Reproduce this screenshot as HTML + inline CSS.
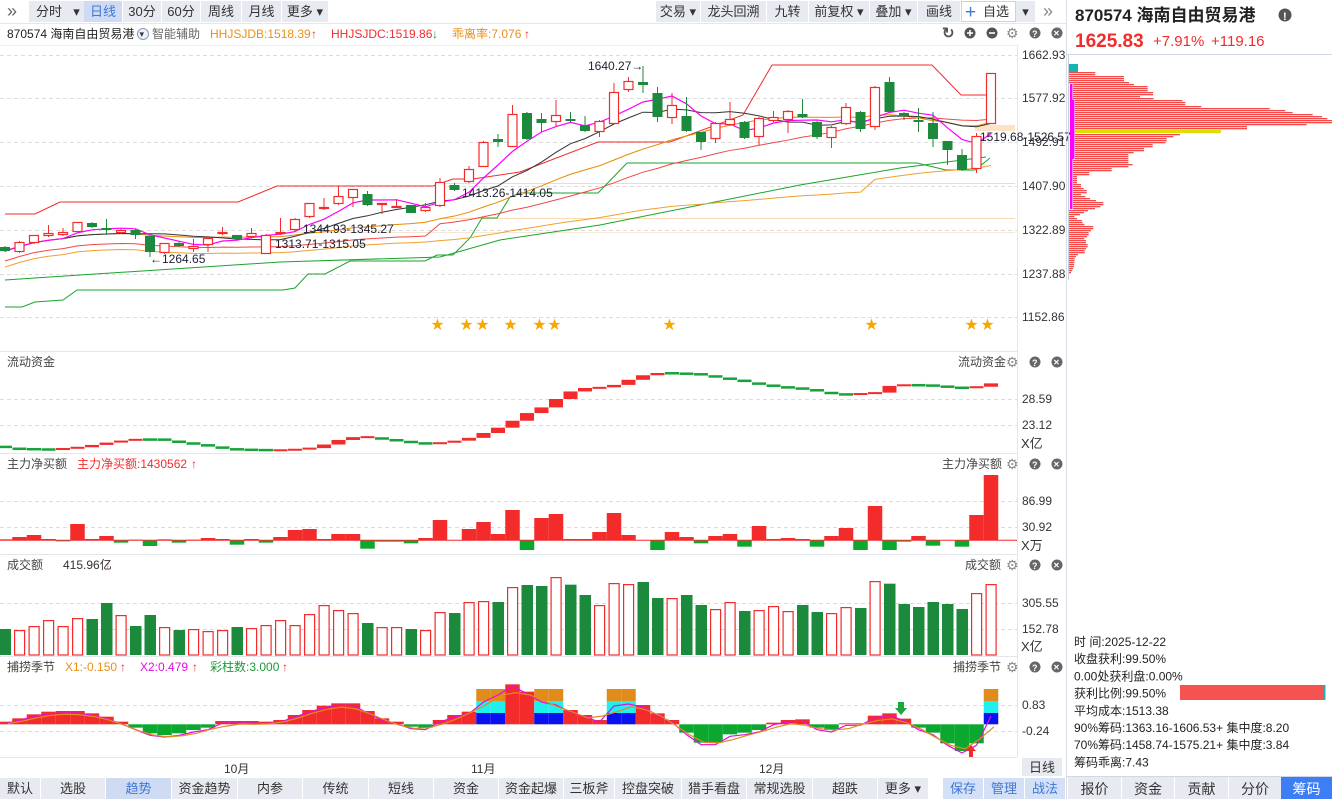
<!DOCTYPE html>
<html><head><meta charset="utf-8">
<style>
html,body{margin:0;padding:0;background:#fff;width:1332px;height:799px;overflow:hidden}
svg text{font-family:"Liberation Sans","Noto Sans CJK SC",sans-serif;font-size:12px}
</style></head>
<body>
<svg id="s" width="1332" height="799" xmlns="http://www.w3.org/2000/svg" style="position:absolute;left:0;top:0">
<rect width="1332" height="799" fill="#fff"/>
</svg>
<script>
const S=document.getElementById('s');const NS='http://www.w3.org/2000/svg';
function el(t,a,txt){const e=document.createElementNS(NS,t);let st='';for(const k in a){if(k==='font-size'||k==='font-weight'){st+=k+':'+a[k]+';';}else e.setAttribute(k,a[k]);}if(st)e.setAttribute('style',st);if(txt!==undefined)e.textContent=txt;S.appendChild(e);return e;}
function R(x,y,w,h,f,extra){return el('rect',Object.assign({x,y,width:w,height:h,fill:f},extra||{}));}
function T(x,y,s,c,extra){return el('text',Object.assign({x,y,fill:c||'#333'},extra||{}),s);}
function L(x1,y1,x2,y2,c,extra){return el('line',Object.assign({x1,y1,x2,y2,stroke:c,'stroke-width':1},extra||{}));}
function P(pts,c,w){return el('polyline',{points:pts.map(p=>p.join(',')).join(' '),fill:'none',stroke:c,'stroke-width':w||1});}
const RED='#f32b2b',GRN='#1b8a3c',XS=i=>5+i*14.5;

// ---------- top toolbar ----------
R(0,0,1066,23,'#fff');
T(7,17,'»','#666',{'font-size':'18px'});
const tb=[[29,40,'分时'],[69,15,'▾'],[84,38,'日线',1],[123,38,'30分'],[162,38,'60分'],[201,40,'周线'],[242,39,'月线'],[282,46,'更多 ▾']];
tb.forEach(b=>{R(b[0],1,b[1],21,b[3]?'#cfdbf2':'#e7eaf0');T(b[0]+b[1]/2,16,b[2],b[3]?'#3c78d8':'#333',{'text-anchor':'middle','font-size':'13px'});});
const tb2=[[656,44,'交易 ▾'],[701,65,'龙头回溯'],[767,41,'九转'],[809,60,'前复权 ▾'],[870,47,'叠加 ▾'],[918,42,'画线'],[1016,19,'▾']];
tb2.forEach(b=>{R(b[0],1,b[1],21,'#e7eaf0');T(b[0]+b[1]/2,16,b[2],'#333',{'text-anchor':'middle','font-size':'13px'});});
R(961.5,1.5,54,20,'#fff',{stroke:'#c9d3e6'});T(965,18,'+','#3c78d8',{'font-size':'19px'});T(983,16,'自选','#333',{'font-size':'13px'});
T(1043,17,'»','#888',{'font-size':'18px'});
L(0,23.5,1066,23.5,'#e3e6ec');

// row2 labels
T(7,38,'870574 海南自由贸易港','#222');
el('circle',{cx:143,cy:34,r:5.5,fill:'#eef2f8',stroke:'#8a9ab5'});T(139.5,37,'▾','#334',{'font-size':'9px'});
T(152,38,'智能辅助','#666');
T(210,38,'HHJSJDB:1518.39','#e8901a');T(311,38,'↑',RED,{'font-weight':'bold'});
T(331,38,'HHJSJDC:1519.86',RED);T(432,38,'↓','#1a9a3a',{'font-weight':'bold'});
T(452,38,'乖离率:7.076','#e8901a');T(524,38,'↑',RED,{'font-weight':'bold'});
function icons(y,withRot){
  if(withRot){T(942,y+5,'↻','#555',{'font-size':'15px','font-weight':'bold'});
  el('circle',{cx:970,cy:y,r:5.5,fill:'#555'});R(967,y-.8,6,1.6,'#fff');R(969.2,y-3,1.6,6,'#fff');
  el('circle',{cx:992,cy:y,r:5.5,fill:'#555'});R(989,y-.8,6,1.6,'#fff');}
  T(1006,y+5,'⚙','#888',{'font-size':'14px'});
  el('circle',{cx:1035,cy:y,r:5.5,fill:'#666'});T(1032,y+4,'?','#fff',{'font-size':'9px','font-weight':'bold'});
  el('circle',{cx:1057,cy:y,r:5.5,fill:'#666'});T(1053.5,y+3.5,'×','#fff',{'font-size':'10px','font-weight':'bold'});
}
icons(33,true);
L(0,45.5,1017,45.5,'#eef0f4');

// axis divider
L(1017.5,45,1017.5,757,'#e3e6ec');L(1066.5,0,1066.5,799,'#d8dde6');

// ---------- main chart ----------
const pyl=[[55,'1662.93'],[98,'1577.92'],[142,'1492.91'],[186,'1407.90'],[230,'1322.89'],[274,'1237.88'],[317,'1152.86']];
pyl.forEach(p=>{L(0,p[0]+.5,1017,p[0]+.5,'#dcdcdc',{'stroke-dasharray':'4,3'});T(1022,p[0]+4,p[1],'#333');});
L(440,183.5,1015,183.5,'#fbd9b5');L(440,218.5,1015,218.5,'#fbd9b5');L(275,232.5,1015,232.5,'#f7e8d6');
R(975,125,40,6,'#fde2c8');

// channel lines
P([[5,214],[35,214],[60,202],[238,202],[277,186],[433,186],[453,179],[473,179],[520,172],[598,142],[670,142],[743,115],[772,65],[932,65],[961,95],[990,95]],RED);
P([[5,307],[22,307],[35,302],[63,300],[77,290],[283,290],[295,288],[308,274],[325,274],[350,261],[425,261],[437,255],[453,255],[470,238],[482,218],[497,218],[510,197],[520,193],[598,193],[627,163],[917,163],[946,170],[975,170],[990,158]],'#1aa52a');
P([[5,280],[80,275],[280,262],[440,257],[500,240],[600,225],[700,205],[800,185],[900,168],[986,157]],'#1aa52a');

const C=[['G',247,251,246,252],['R',242,252,241,253],['R',235,243,235,244],['R',233,236,225,237],['R',232,235,228,236],['R',222,232,222,232],['G',223,227,222,228],['G',228,230,219,235],['R',230,233,229,234],['G',230,235,229,239],
['G',236,252,236,257],['R',243,253,243,254],['G',243,246,241,247],['R',246,249,239,252],['R',238,245,237,252],['R',232,234,227,235],['G',235,239,235,240],['R',233,237,228,238],['R',235,254,234,254],['R',232,234,218,235],
['R',219,230,218,231],['R',203,217,203,218],['R',207,209,198,210],['R',196,204,186,205],['R',189,198,189,207],['G',194,205,191,206],['R',203,205,203,214],['R',206,207,199,208],['G',205,213,205,213],['R',207,211,203,212],
['R',182,206,178,207],['G',185,190,183,191],['R',169,182,166,183],['R',142,167,141,167],['G',139,142,134,147],['R',114,147,105,147],['G',113,139,112,140],['G',119,123,113,132],['R',115,122,100,127],['G',119,121,112,122],
['G',125,131,116,132],['R',121,132,120,137],['R',92,124,83,124],['R',81,90,77,92],['G',82,85,66,93],['G',93,117,87,122],['R',105,118,93,124],['G',116,131,97,132],['G',132,142,132,150],['R',123,139,122,143],
['R',119,125,102,126],['G',122,138,121,139],['R',118,137,117,145],['R',117,121,111,122],['R',111,120,110,133],['G',114,117,99,118],['G',122,137,121,139],['R',127,138,126,148],['R',107,124,103,125],['G',112,129,111,132],
['R',87,127,86,130],['G',82,112,77,113],['G',113,116,112,120],['G',120,122,108,132],['G',123,139,112,147],['G',141,150,141,165],['G',155,170,149,171],['R',136,169,133,173],['R',73,124,73,124]];
const close=C.map(c=>c[0]=='R'?c[1]:c[2]);
function ma(n){return close.map((v,i)=>{let s=0,k=0;for(let j=Math.max(0,i-n+1);j<=i;j++){s+=close[j];k++;}return [XS(i),s/k+(n>20?(i<n?10:0):0)];});}
P(ma(60).map(p=>[p[0],p[1]+6]),'#f0a030');P(ma(30),'#f04848');P(ma(20),'#e88a00');P(ma(10),'#333');P(ma(5),'#f0f',1.2);

C.forEach((c,i)=>{const x=XS(i);const col=c[0]=='R'?RED:GRN;
  L(x,c[3],x,c[4],col);
  if(c[0]=='R')R(x-4.5,c[1]+.5,9,Math.max(1,c[2]-c[1]-1),'#fff',{stroke:col,'stroke-width':1.2});
  else R(x-5,c[1],10,Math.max(2,c[2]-c[1]),col);
});
T(588,70,'1640.27→','#223');T(462,197,'1413.26-1414.05','#223');T(303,233,'1344.93-1345.27','#223');T(275,248,'1313.71-1315.05','#223');T(150,263,'←1264.65','#223');
T(980,141,'1519.68-1526.57','#223');
[437,466,482,510,539,554,669,871,971,987].forEach(x=>T(x-6,329,'★','#f5a800',{'font-size':'13px'}));

// ---------- panel headers / separators ----------
[[351,'流动资金',958],[453,'主力净买额',942],[554,'成交额',965],[656,'捕捞季节',953]].forEach(p=>{
  L(0,p[0]+.5,1017,p[0]+.5,'#e3e6ec');T(7,p[0]+15,p[1],'#444');T(p[2],p[0]+15,p[1],'#444');icons(p[0]+11,false);});
T(77,468,'主力净买额:1430562',RED);T(191,468,'↑',RED,{'font-weight':'bold'});
T(63,569,'415.96亿','#333');T(105,569,'↑',RED,{'font-weight':'bold'});
T(65,671,'X1:-0.150','#e8901a');T(120,671,'↑',RED,{'font-weight':'bold'});
T(140,671,'X2:0.479','#e010e0');T(192,671,'↑',RED,{'font-weight':'bold'});
T(210,671,'彩柱数:3.000','#1a9a3a');T(282,671,'↑',RED,{'font-weight':'bold'});
[[399,'28.59'],[425,'23.12'],[501,'86.99'],[527,'30.92'],[603,'305.55'],[629,'152.78'],[705,'0.83'],[731,'-0.24']].forEach(p=>{L(0,p[0]+.5,1017,p[0]+.5,'#dcdcdc',{'stroke-dasharray':'4,3'});T(1022,p[0]+4,p[1],'#333');});
T(1021,448,'X亿','#333',{'font-size':'13px'});T(1021,550,'X万','#333',{'font-size':'13px'});T(1021,651,'X亿','#333',{'font-size':'13px'});

// ---------- 流动资金 ----------
const lk=[[10,290],[30,296],[75,298],[110,293],[155,278],[190,268],[240,268],[260,274],[300,284],[325,292],[350,298],[400,300],[430,298],[455,294],[475,283],[495,270],[520,260],[540,260],[560,265],[580,270],[600,275],[625,280],[645,278],[665,272],[690,262],[710,247],[730,232],[750,212],[770,190],[795,170],[815,145],[835,124],[860,112],[880,112],[900,104],[920,89],[940,76],[965,68],[1000,70],[1025,72],[1045,78],[1070,86],[1090,92],[1110,100],[1130,106],[1150,111],[1170,114],[1195,120],[1215,128],[1240,133],[1280,128],[1300,108],[1325,104],[1365,106],[1410,113],[1430,110],[1450,100]].map(p=>[p[0]/1.463,350+p[1]/3]);
function interp(arr,x){if(x<=arr[0][0])return arr[0][1];for(let j=1;j<arr.length;j++){if(x<=arr[j][0]){const a=arr[j-1],b=arr[j];return a[1]+(b[1]-a[1])*(x-a[0])/(b[0]-a[0]);}}return arr[arr.length-1][1];}
let prev=null;
for(let i=0;i<69;i++){const x=XS(i),v=interp(lk,x);
  if(prev!==null&&v<prev-1.5)R(x-7,v,14,prev-v,RED);
  else if(prev!==null&&v<prev)R(x-7,v-.5,14,2,RED);
  else R(x-7,v-1,14,2.5,'#18a33a');
  prev=v;}

// ---------- 主力净买额 ----------
const mz=[568,561,555,567,-574,522,567,558,-578,569,-588,568,-578,569,564,567,-584,567,-578,561,540,537,567,552,552,-596,-575,-575,-580,564,510,570,537,516,552,480,-600,504,492,567,567,546,489,555,570,-600,546,561,-580,558,552,-590,528,567,564,567,-590,558,534,-600,468,-600,-575,558,-587,570,-590,495,375];
const base=540.3;
mz.forEach((z,i)=>{const x=XS(i)-7.25;if(z>0){const y=350+z/3;R(x,y,14.5,base-y,RED);}else{const y=350-z/3;R(x,base,14.5,y-base,'#0aa82e');}});
L(0,base,1017,base,RED,{'stroke-width':1});

// ---------- 成交额 ----------
const vz=['G237','R240','R228','R210','R228','R204','G207','G159','R195','G228','G195','R231','G240','R237','R243','R240','G231','R234','R225','R210','R225','R192','R165','R180','R189','G219','R231','R231','G237','R240','R186','G189','R156','R153','G156','R111','G105','G108','R81','G104','G135','R165','R99','R102','G96','G144','R144','G135','G165','R177','R156','G183','R180','R168','R183','G165','G186','R189','R171','G174','R93','G101','G162','G171','G156','G162','G177','R129','R102'];
vz.forEach((s,i)=>{const y=550+(+s.slice(1))/3,x=XS(i)-5.5;
  if(s[0]=='R')R(x+.6,y+.6,10,655-y-.6,'#fff',{stroke:RED,'stroke-width':1.2});else R(x,y,11.5,655-y,GRN);});

// ---------- 捕捞季节 ----------
const cz=[515,505,493,485,483,483,490,500,515,-533,-550,-555,-550,-540,-533,513,513,513,515,510,495,480,467,460,460,483,505,515,-530,-533,510,495,485,'M','M',403,425,'M','M',480,495,510,'M','M',465,490,510,-548,-578,-578,-553,-548,-540,518,510,508,-533,-540,520,520,497,490,506,-533,-548,-580,-603,-580,'M'];
const b0=724.3;const lv=[];
cz.forEach((z,i)=>{const x=XS(i)-7.25;
  if(z==='M'){R(x,689,14.5,12,'#e08c1c');R(x,701,14.5,12,'#1ef0f0');R(x,713,14.5,11.3,'#0a10f0');lv.push(700-(i==68?-8:0));}
  else if(z>0){const y=550+z/3;R(x,y,14.5,b0-y,RED);lv.push(y);}
  else{const y=550-z/3;R(x,b0,14.5,y-b0,'#0aa82e');lv.push(y);}});
const lvf=lv.map((v,i)=>v);lvf[33]=700;lvf[34]=693;lvf[37]=700;lvf[38]=703;lvf[42]=704;lvf[43]=702;lvf[68]=714;
P(lvf.map((v,i)=>[XS(i),v+2]),'#e010e0',1.2);
P(lvf.map((v,i)=>{const a=lvf[Math.max(0,i-1)],c=lvf[Math.min(68,i+1)];return [XS(i)+3,(a+v+c)/3+3];}),'#e08c1c',1.2);
el('path',{d:'M898 702 h6 v6 h3 l-6 7 l-6 -7 h3z',fill:'#1aa83a'});
el('path',{d:'M971 745 l-5 6 h3 v6 h4 v-6 h3z',fill:RED});

// ---------- date axis / bottom tabs ----------
L(0,757.5,1017,757.5,'#e3e6ec');
T(224,773,'10月','#333');T(471,773,'11月','#333');T(759,773,'12月','#333');
R(1022,758,40,18,'#e7eaf0');T(1042,772,'日线','#333',{'text-anchor':'middle','font-size':'13px'});
const bt=[[0,40,'默认'],[41,64,'选股'],[106,65,'趋势',1],[172,65,'资金趋势'],[238,64,'内参'],[303,65,'传统'],[369,64,'短线'],[434,64,'资金'],[499,64,'资金起爆'],[564,50,'三板斧'],[615,66,'控盘突破'],[682,64,'猎手看盘'],[747,65,'常规选股'],[813,64,'超跌'],[878,50,'更多 ▾'],[943,40,'保存',2],[984,40,'管理',2],[1025,40,'战法',2]];
bt.forEach(b=>{R(b[0],778,b[1],21,b[3]==1?'#cfdbf2':b[3]==2?'#d4e0f6':'#e7eaf0');T(b[0]+b[1]/2,793,b[2],b[3]?'#3c78d8':'#333',{'text-anchor':'middle','font-size':'13px'});});

// ---------- right panel ----------
T(1075,21,'870574 海南自由贸易港','#222',{'font-size':'17px','font-weight':'bold'});
el('circle',{cx:1285,cy:15,r:6.5,fill:'#555'});T(1283,20,'!','#fff',{'font-size':'11px','font-weight':'bold'});
T(1075,47,'1625.83',RED,{'font-size':'19px','font-weight':'bold'});
T(1153,46,'+7.91%',RED,{'font-size':'15px'});T(1211,46,'+119.16',RED,{'font-size':'15px'});
L(1067,54.5,1332,54.5,'#d0d8e6');
// chip profile
R(1069,64,9,8,'#14b4b4');
const kp=[[66,88],[73,88],[78,174],[92,174],[96,189],[102,204],[108,245],[120,245],[126,261],[132,261],[138,222],[144,263],[150,349],[156,358],[162,358],[168,406],[174,611],[180,658],[186,680],[192,740],[198,768],[204,784],[210,798],[216,798],[222,722],[228,543],[234,543],[240,528],[252,342],[258,322],[264,302],[270,302],[276,299],[282,260],[288,260],[294,234],[300,234],[306,203],[312,187],[330,187],[336,187],[342,200],[348,187],[354,137],[360,137],[366,70],[372,70],[378,33],[396,33],[402,45],[408,45],[414,53],[420,62],[426,62],[432,45],[438,58],[444,72],[450,90],[456,112],[462,112],[468,103],[474,87],[480,66],[486,54],[492,42],[498,25],[504,33],[510,48],[516,50],[522,55],[528,82],[534,82],[540,75],[546,68],[552,68],[558,63],[564,55],[570,60],[576,60],[582,65],[588,65],[594,60],[600,56],[606,56],[612,36],[618,30],[624,26],[648,24],[654,21],[660,18],[666,15]];
function kpi(z){for(let j=1;j<kp.length;j++){if(z<=kp[j][0]){const a=kp[j-1],b=kp[j];return a[1]+(b[1]-a[1])*(z-a[0])/(b[0]-a[0]);}}return 15;}
for(let z=66;z<=666;z+=6){const y=50+z/3;let x0=1069;if(z>=102&&z<=476)x0=1073;if(z>=150&&z<=326)x0=1075;
  const x1=1066+kpi(z)/3;if(Math.abs(z-243)<4)continue;R(x0,y,Math.max(1,x1-x0),1.3,'#f54a4a');}
R(1075,130,146,3,'#dede00');
R(1070,84,2.5,125,'#f0f');R(1072,100,2.5,59,'#f0f');
L(1068.5,55,1068.5,280,'#c8d0e0');
// info
const info=['时          间:2025-12-22','收盘获利:99.50%','0.00处获利盘:0.00%','获利比例:99.50%','平均成本:1513.38','90%筹码:1363.16-1606.53+ 集中度:8.20','70%筹码:1458.74-1575.21+ 集中度:3.84','筹码乖离:7.43'];
info.forEach((s,i)=>T(1074,646+i*17.2,s,'#222'));
R(1180,685,145,15,'#f55252');R(1324,685,1.5,15,'#18b4b4');
const rt=[[1068,53,'报价'],[1122,52,'资金'],[1175,53,'贡献'],[1229,52,'分价'],[1281,51,'筹码',1]];
rt.forEach(b=>{R(b[0],777,b[1],22,b[3]?'#3d7ef6':'#e7eaf0');T(b[0]+b[1]/2,794,b[2],b[3]?'#fff':'#333',{'text-anchor':'middle','font-size':'14px'});});
L(1067,776.5,1332,776.5,'#d0d8e6');
</script>
</body></html>
